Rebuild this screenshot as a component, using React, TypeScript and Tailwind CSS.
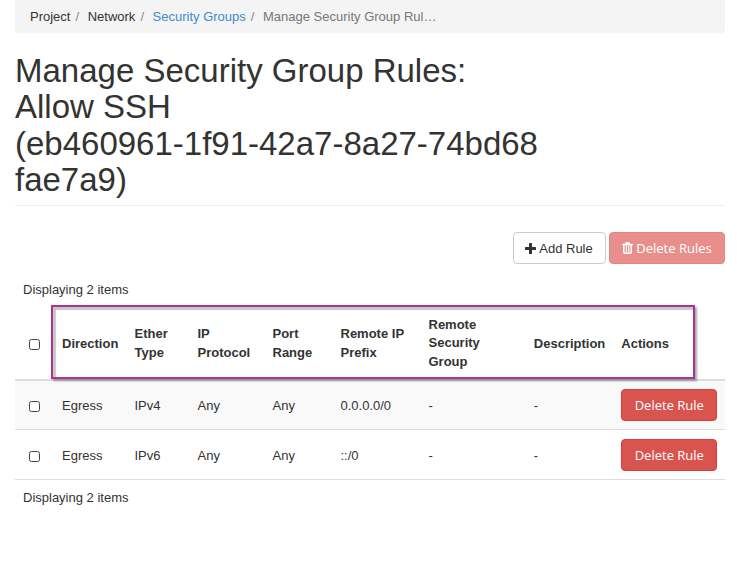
import React from "react";

const columns: { label: string[]; width: string }[] = [
  { label: ["Direction"], width: "w-[72.5px]" },
  { label: ["Ether", "Type"], width: "w-[63px]" },
  { label: ["IP", "Protocol"], width: "w-[75px]" },
  { label: ["Port", "Range"], width: "w-[68px]" },
  { label: ["Remote IP", "Prefix"], width: "w-[88px]" },
  { label: ["Remote", "Security", "Group"], width: "w-[105.3px]" },
  { label: ["Description"], width: "w-[87.5px]" },
  { label: ["Actions"], width: "w-[110.7px]" },
];

const rows = [
  ["Egress", "IPv4", "Any", "Any", "0.0.0.0/0", "-", "-"],
  ["Egress", "IPv6", "Any", "Any", "::/0", "-", "-"],
];

function Box() {
  return <span className="block h-[11px] w-[11px] rounded-[2.5px] border border-[#444] bg-white" />;
}

function Plus() {
  return (
    <svg viewBox="0 0 11 11" className="h-[11px] w-[11px]" fill="currentColor">
      <path d="M4.6 0h1.8q.6 0 .6.6V4h3.4q.6 0 .6.6v1.8q0 .6-.6.6H7v3.4q0 .6-.6.6H4.6q-.6 0-.6-.6V7H.6q-.6 0-.6-.6V4.6q0-.6.6-.6H4V.6q0-.6.6-.6z" />
    </svg>
  );
}

function Trash() {
  return (
    <svg viewBox="0 0 11 12" className="h-3 w-[11px]" fill="none" stroke="currentColor">
      <path d="M.2 2.6h10.6" strokeWidth="1.5" />
      <path d="M3.5 2.2L4 .9h3l.5 1.3M1.8 2.8v7.5q0 .9.8.9h5.8q.8 0 .8-.9V2.8" strokeWidth="1.5" />
      <path d="M4.3 3.2v7.5M6.7 3.2v7.5" strokeWidth="1.1" />
    </svg>
  );
}

export default function App() {
  return (
    <main className="h-[575px] w-[737px] overflow-hidden bg-white pl-[15px] pr-3 font-['Liberation_Sans',Arial,sans-serif] text-[13px] leading-[18.57px] text-[#333]">
      <nav className="flex h-[33px] items-center rounded-b bg-[#f4f4f4] pl-[15px] pt-px">
        <span>Project</span>
        <span className="pl-[5px] pr-[8.6px] text-[#888]">/</span>
        <span>Network</span>
        <span className="pl-[5px] pr-[8.6px] text-[#888]">/</span>
        <a className="text-[#428bca]">Security Groups</a>
        <span className="pl-[5px] pr-[8.6px] text-[#888]">/</span>
        <span className="text-[#777]">Manage Security Group Rul…</span>
      </nav>
      <h1 className="mt-5 h-[153px] border-b border-[#eee] text-[33px] leading-[36.3px]">
        Manage Security Group Rules:
        <br />
        Allow SSH
        <br />
        (eb460961-1f91-42a7-8a27-74bd68
        <br />
        fae7a9)
      </h1>
      <div className="mt-[26px] flex h-8 justify-end gap-[3px]">
        <button className="flex w-[93px] items-center justify-center gap-[3px] rounded border border-[#ccc] pr-px">
          <Plus />
          <span className="pt-[2px]">Add Rule</span>
        </button>
        <button className="flex w-[116px] items-center justify-center gap-[3px] rounded border border-[#e38784] bg-[#e88f8c] font-['Open_Sans',sans-serif] text-white">
          <Trash />
          Delete Rules
        </button>
      </div>
      <p className="mt-[17px] px-2">Displaying 2 items</p>
      <div className="relative mt-[5px] flex h-[76px] items-center border-b-2 border-[#ddd] pt-1">
        <div className="w-[39px] pl-[14px] pt-px">
          <Box />
        </div>
        {columns.map((c) => (
          <div key={c.label.join(" ")} className={`${c.width} shrink-0 pl-2 font-bold ${c.label.length === 1 ? "pt-px" : ""}`}>
            {c.label.map((l) => (
              <div key={l}>{l}</div>
            ))}
          </div>
        ))}
        <div className="absolute left-9 top-0 h-[74px] w-[644px] border-2 border-[#af3292] shadow-[2px_2px_2px_rgba(0,0,0,0.35),inset_3px_3px_1px_rgba(0,0,0,0.22)]" />
      </div>
      {rows.map((r, i) => (
        <div key={r[1]} className={`flex items-center border-b border-[#ddd] ${i === 0 ? "h-[49px] bg-[#f9f9f9]" : "h-[50px] pt-px"}`}>
          <div className="w-[39px] pl-[14px] pt-[3px]">
            <Box />
          </div>
          {r.map((v, j) => (
            <div key={j} className={`${columns[j].width} shrink-0 pl-2 pt-[3px]`}>
              {v}
            </div>
          ))}
          <button className="ml-2 h-8 w-24 rounded border border-[#d43f3a] bg-[#d9534f] pt-px font-['Open_Sans',sans-serif] text-white">
            Delete Rule
          </button>
        </div>
      ))}
      <p className="mt-[9px] px-2">Displaying 2 items</p>
    </main>
  );
}
